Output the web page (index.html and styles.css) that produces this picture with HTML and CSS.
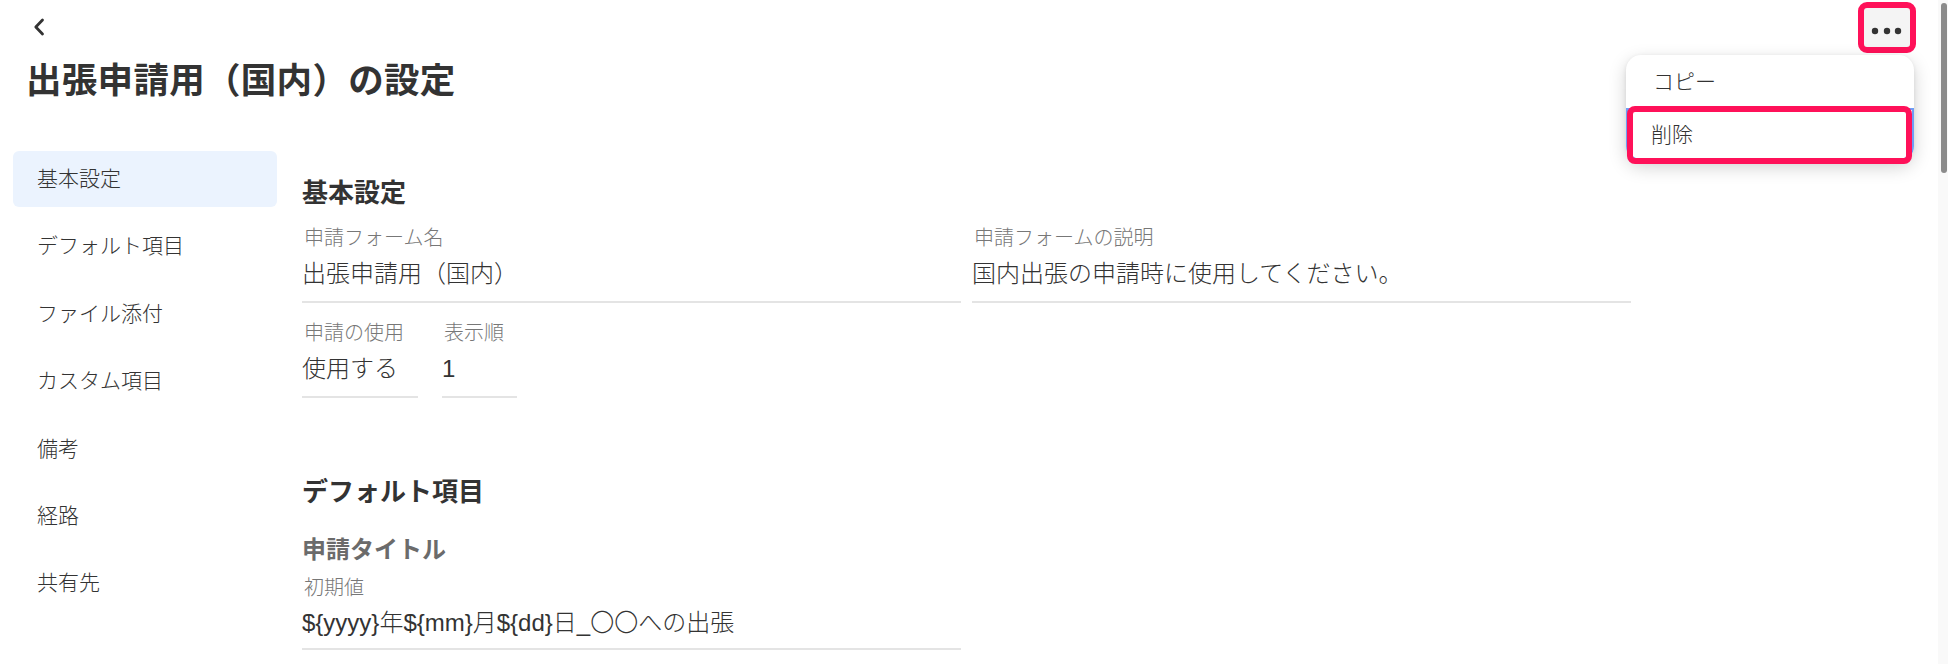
FILE: index.html
```html
<!DOCTYPE html>
<html lang="ja">
<head>
<meta charset="utf-8">
<title>出張申請用（国内）の設定</title>
<link rel="stylesheet" href="styles.css">
</head>
<body>
<div class="app">
  <div class="topbar">
    <button class="back" aria-label="戻る">
      <svg width="12" height="18" viewBox="0 0 12 18"><path d="M9.5 2 L2.8 9 L9.5 16" fill="none" stroke="#333" stroke-width="2.8" stroke-linecap="round" stroke-linejoin="round"/></svg>
    </button>
    <button class="more" aria-label="その他">
      <svg width="46" height="39" viewBox="0 0 46 39"><circle cx="11" cy="23" r="3.2" fill="#333"/><circle cx="23" cy="23" r="3.2" fill="#333"/><circle cx="34" cy="23" r="3.2" fill="#333"/></svg>
    </button>
  </div>
  <h1 class="title">出張申請用（国内）の設定</h1>
  <div class="layout">
    <nav class="sidebar">
      <div class="nav-item active">基本設定</div>
      <div class="nav-item">デフォルト項目</div>
      <div class="nav-item">ファイル添付</div>
      <div class="nav-item">カスタム項目</div>
      <div class="nav-item">備考</div>
      <div class="nav-item">経路</div>
      <div class="nav-item">共有先</div>
    </nav>
    <main class="content">
      <h2 class="section-title">基本設定</h2>
      <div class="row two-col">
        <div class="field">
          <div class="label">申請フォーム名</div>
          <div class="value">出張申請用（国内）</div>
        </div>
        <div class="field">
          <div class="label">申請フォームの説明</div>
          <div class="value">国内出張の申請時に使用してください。</div>
        </div>
      </div>
      <div class="row small-row">
        <div class="field use">
          <div class="label">申請の使用</div>
          <div class="value">使用する</div>
        </div>
        <div class="field order">
          <div class="label">表示順</div>
          <div class="value">1</div>
        </div>
      </div>
      <h2 class="section-title second">デフォルト項目</h2>
      <h3 class="sub-title">申請タイトル</h3>
      <div class="field wide">
        <div class="label">初期値</div>
        <div class="value">${yyyy}年${mm}月${dd}日_〇〇への出張</div>
      </div>
    </main>
  </div>
</div>
<div class="menu">
  <div class="menu-item">コピー</div>
  <div class="menu-item selected">削除</div>
  <div class="highlight"></div>
</div>
<div class="scroll-track"><div class="scroll-thumb"></div></div>
</body>
</html>
```
FILE: styles.css
```css
* { box-sizing: border-box; }
html, body {
  margin: 0;
  padding: 0;
  width: 1948px;
  height: 664px;
  overflow: hidden;
  background: #ffffff;
  font-family: "Liberation Sans", "Noto Sans CJK JP", sans-serif;
  color: #333333;
}
.app {
  padding: 0 32px 0 13px;
}
.topbar {
  height: 55px;
  display: flex;
  justify-content: space-between;
  align-items: flex-start;
}
button {
  border: none;
  background: none;
  padding: 0;
  margin: 0;
  font: inherit;
  cursor: pointer;
}
.back {
  margin-top: 18px;
  margin-left: 20px;
  width: 12px;
  height: 18px;
  display: block;
}
.back svg, .more svg { display: block; }
.more {
  margin-top: 2px;
  width: 58px;
  height: 51px;
  border: 6px solid #ff1159;
  border-radius: 9px;
  background: #f4f4f4;
}
.title {
  margin: 2px 0 0 13px;
  font-size: 35.5px;
  line-height: 48px;
  font-weight: 700;
  color: #333333;
  letter-spacing: 0.3px;
}
.layout {
  display: flex;
  margin-top: 46px;
}
.sidebar {
  width: 264px;
  flex: none;
  display: flex;
  flex-direction: column;
  gap: 11.4px;
}
.nav-item {
  height: 56px;
  line-height: 56px;
  padding-left: 24px;
  font-size: 21px;
  font-weight: 300;
  color: #333333;
  border-radius: 6px;
}
.nav-item.active {
  background: #ebf3fe;
}
.content {
  margin-left: 25px;
  padding-top: 24px;
  width: 1329px;
}
.section-title {
  margin: 0;
  font-size: 26px;
  line-height: 36px;
  font-weight: 700;
  color: #333333;
}
.section-title.second {
  margin-top: 76px;
}
.row.two-col {
  margin-top: 13px;
  display: grid;
  grid-template-columns: 659px 659px;
  column-gap: 11px;
}
.row.small-row {
  margin-top: 16px;
  display: flex;
  gap: 24px;
}
.field {
  border-bottom: 2px solid #e4e4e4;
  padding-bottom: 11px;
}
.label {
  font-size: 20px;
  line-height: 28px;
  font-weight: 300;
  color: #777777;
  padding-left: 2px;
}
.value {
  margin-top: 6px;
  font-size: 24px;
  line-height: 32px;
  font-weight: 300;
  color: #333333;
  white-space: nowrap;
}
.field.use { width: 116px; }
.field.order { width: 75px; }
.field.wide {
  width: 659px;
  margin-top: 8px;
  padding-bottom: 9px;
}
.field.wide .value { margin-top: 5px; }
.sub-title {
  margin: 24px 0 0 0;
  font-size: 24px;
  line-height: 32px;
  font-weight: 700;
  color: #6b6b6b;
}
.menu {
  position: absolute;
  top: 55px;
  left: 1626px;
  width: 288px;
  background: #ffffff;
  border-radius: 15px;
  box-shadow: 0 6px 18px rgba(0, 0, 0, 0.18), 0 1px 4px rgba(0, 0, 0, 0.08);
}
.menu-item {
  height: 53px;
  line-height: 53px;
  padding-left: 27px;
  font-size: 21px;
  font-weight: 300;
  color: #333333;
}
.menu-item.selected {
  border: 2px solid #6d9ef6;
  border-radius: 0 0 15px 15px;
  padding-left: 23px;
  line-height: 49px;
}
.highlight {
  position: absolute;
  left: 1px;
  top: 51px;
  width: 285px;
  height: 58px;
  border: 6.5px solid #ff1159;
  border-radius: 8px;
}
.scroll-track {
  position: fixed;
  top: 0;
  right: 0;
  width: 10px;
  height: 664px;
  background: #f9f9f9;
}
.scroll-thumb {
  margin: 3px 0 0 3px;
  width: 6px;
  height: 170px;
  background: #8b8b8b;
  border-radius: 3px;
}
```
